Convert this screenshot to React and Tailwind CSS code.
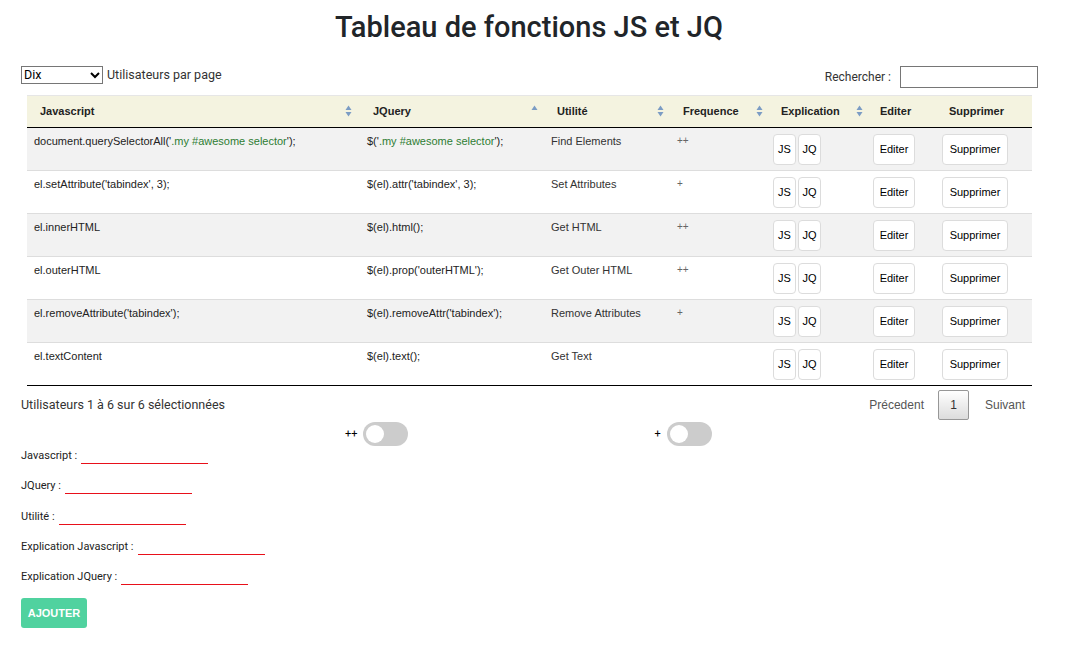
import { useState } from 'react';

const rows = [
    { js: ['document.querySelectorAll(\'', '.my #awesome selector', '\');'], jq: ['$(\'', '.my #awesome selector', '\');'], use: 'Find Elements', freq: '++' },
    { js: ['el.setAttribute(\'tabindex\', 3);'], jq: ['$(el).attr(\'tabindex\', 3);'], use: 'Set Attributes', freq: '+' },
    { js: ['el.innerHTML'], jq: ['$(el).html();'], use: 'Get HTML', freq: '++' },
    { js: ['el.outerHTML'], jq: ['$(el).prop(\'outerHTML\');'], use: 'Get Outer HTML', freq: '++' },
    { js: ['el.removeAttribute(\'tabindex\');'], jq: ['$(el).removeAttr(\'tabindex\');'], use: 'Remove Attributes', freq: '+' },
    { js: ['el.textContent'], jq: ['$(el).text();'], use: 'Get Text', freq: '' },
];

const SortBoth = () => (
    <svg width="7" height="12" viewBox="0 0 7 12" className="shrink-0">
        <path d="M3.5 0.5 L6.5 5 L0.5 5 Z" fill="#7b9cc4" />
        <path d="M3.5 11.5 L6.5 7 L0.5 7 Z" fill="#7b9cc4" />
    </svg>
);

const SortAsc = () => (
    <svg width="7" height="12" viewBox="0 0 7 12" className="shrink-0">
        <path d="M3.5 0.5 L6.5 5 L0.5 5 Z" fill="#7b9cc4" />
    </svg>
);

function Code({ parts }) {
    if (parts.length === 1) return <span>{parts[0]}</span>;
    return (
        <span>
            {parts[0]}
            <span className="text-[#2e7d32]">{parts[1]}</span>
            {parts[2]}
        </span>
    );
}

function Toggle({ label }) {
    const [on, setOn] = useState(false);
    return (
        <div className="flex items-center gap-[6px]">
            <span className="text-[11px] text-black">{label}</span>
            <button
                type="button"
                onClick={() => setOn(!on)}
                className={`flex h-[24px] w-[45px] items-center rounded-full px-[3px] ${on ? 'justify-end bg-[#4fd19e]' : 'justify-start bg-[#cccccc]'}`}
            >
                <span className="h-[18px] w-[18px] rounded-full bg-white" />
            </button>
        </div>
    );
}

const btn = 'h-[31px] rounded-[4px] border border-[#dcdcdc] bg-white text-[11px] text-black';

const fields = ['Javascript :', 'JQuery :', 'Utilité :', 'Explication Javascript :', 'Explication JQuery :'];

export default function App() {
    return (
        <div className="min-h-[648px] bg-white font-['Roboto',sans-serif] text-[#212529]">
            <h1 className="pr-[12px] pt-[9px] text-center text-[29px] font-medium leading-[36px]">
                Tableau de fonctions JS et JQ
            </h1>

            <div className="mx-[21px] mt-[21px] w-[1017px]">
                <div className="flex items-start justify-between">
                    <div className="flex items-center gap-[4px] text-[12.5px] text-[#333]">
                        <div className="relative">
                            <select className="h-[18px] w-[82px] appearance-none border border-[#767676] bg-white pl-[2px] text-[12.5px] leading-[16px] text-black">
                                <option>Dix</option>
                                <option>Vingt</option>
                            </select>
                            <svg width="10" height="7" viewBox="0 0 10 7" className="pointer-events-none absolute right-[3px] top-[6px]">
                                <path d="M1 1 L5 5 L9 1" fill="none" stroke="#000" strokeWidth="2" />
                            </svg>
                        </div>
                        <span className="leading-[16px]">Utilisateurs par page</span>
                    </div>
                    <div className="flex items-center gap-[9px] text-[12px] text-[#333]">
                        <span>Rechercher :</span>
                        <input className="h-[22px] w-[138px] border border-[#767676] bg-white" />
                    </div>
                </div>

                <table className="mx-[6px] mt-[7px] w-[1005px] table-fixed border-collapse font-['Liberation_Sans',sans-serif] text-[11px]">
                    <colgroup>
                        <col className="w-[333px]" />
                        <col className="w-[184px]" />
                        <col className="w-[126px]" />
                        <col className="w-[99px]" />
                        <col className="w-[100px]" />
                        <col className="w-[66px]" />
                        <col className="w-[97px]" />
                    </colgroup>
                    <thead>
                        <tr className="h-[32px] border-t border-b border-t-[#e6e6e6] border-b-black bg-[#f4f3e0] text-[11px] font-bold text-[#222]">
                            <th className="pl-[13px] pr-[8px] pb-[1px] text-left font-bold">
                                <div className="flex items-center justify-between">Javascript<SortBoth /></div>
                            </th>
                            <th className="pl-[13px] pr-[6px] pb-[1px] text-left font-bold">
                                <div className="flex items-center justify-between">JQuery<SortAsc /></div>
                            </th>
                            <th className="pl-[13px] pr-[6px] pb-[1px] text-left font-bold">
                                <div className="flex items-center justify-between">Utilité<SortBoth /></div>
                            </th>
                            <th className="pl-[13px] pr-[6px] pb-[1px] text-left font-bold">
                                <div className="flex items-center justify-between">Frequence<SortBoth /></div>
                            </th>
                            <th className="pl-[12px] pr-[6px] pb-[1px] text-left font-bold">
                                <div className="flex items-center justify-between">Explication<SortBoth /></div>
                            </th>
                            <th className="pl-[11px] pb-[1px] text-left font-bold">Editer</th>
                            <th className="pl-[14px] pb-[1px] text-left font-bold">Supprimer</th>
                        </tr>
                    </thead>
                    <tbody>
                        {rows.map((r, i) => (
                            <tr
                                key={i}
                                className={`h-[43px] border-b ${i === rows.length - 1 ? 'border-b-black' : 'border-b-[#dddddd]'} ${i % 2 === 0 ? 'bg-[#f2f2f2]' : 'bg-white'}`}
                            >
                                <td className="pl-[7px] pt-[5px] align-top text-[#222]"><Code parts={r.js} /></td>
                                <td className="pl-[7px] pt-[5px] align-top text-[#222]"><Code parts={r.jq} /></td>
                                <td className="pl-[7px] pt-[5px] align-top text-[#333]">{r.use}</td>
                                <td className="pl-[7px] pt-[5px] align-top text-[10px] text-[#666]">{r.freq}</td>
                                <td className="pl-[4px] align-middle">
                                    <div className="flex gap-[2px]">
                                        <button type="button" className={`${btn} w-[23px]`}>JS</button>
                                        <button type="button" className={`${btn} w-[23px]`}>JQ</button>
                                    </div>
                                </td>
                                <td className="pl-[4px] align-middle">
                                    <button type="button" className={`${btn} w-[42px]`}>Editer</button>
                                </td>
                                <td className="pl-[7px] align-middle">
                                    <button type="button" className={`${btn} w-[66px]`}>Supprimer</button>
                                </td>
                            </tr>
                        ))}
                    </tbody>
                </table>

                <div className="mt-[4px] flex items-center justify-between pr-[13px]">
                    <span className="text-[12.5px] text-[#333]">Utilisateurs 1 à 6 sur 6 sélectionnées</span>
                    <div className="flex items-center font-['Liberation_Sans',sans-serif] text-[12px] text-[#555]">
                        <span className="mr-[14px]">Précedent</span>
                        <span className="flex h-[30px] w-[31px] items-center justify-center rounded-[2px] border border-[#979797] bg-gradient-to-b from-white to-[#dcdcdc] text-[#333]">1</span>
                        <span className="ml-[16px]">Suivant</span>
                    </div>
                </div>

                <div className="mt-[2px] flex h-[24px]">
                    <div className="ml-[324px]"><Toggle label="++" /></div>
                    <div className="ml-[246px]"><Toggle label="+" /></div>
                </div>

                <form className="flex flex-col text-[11px] text-[#222]" onSubmit={(e) => e.preventDefault()}>
                    {fields.map((l) => (
                        <div key={l} className="flex h-[30.25px] items-start pt-[3px]">
                            <span className="leading-[13px]">{l}</span>
                            <input className="ml-[4px] h-[15px] w-[127px] border-b border-b-[#e8101a] bg-transparent outline-none" />
                        </div>
                    ))}
                    <button
                        type="submit"
                        className="mt-[1px] h-[30px] w-[66px] rounded-[3px] bg-[#50d29f] font-['Liberation_Sans',sans-serif] text-[11px] font-bold text-white"
                    >
                        AJOUTER
                    </button>
                </form>
            </div>
        </div>
    );
}
